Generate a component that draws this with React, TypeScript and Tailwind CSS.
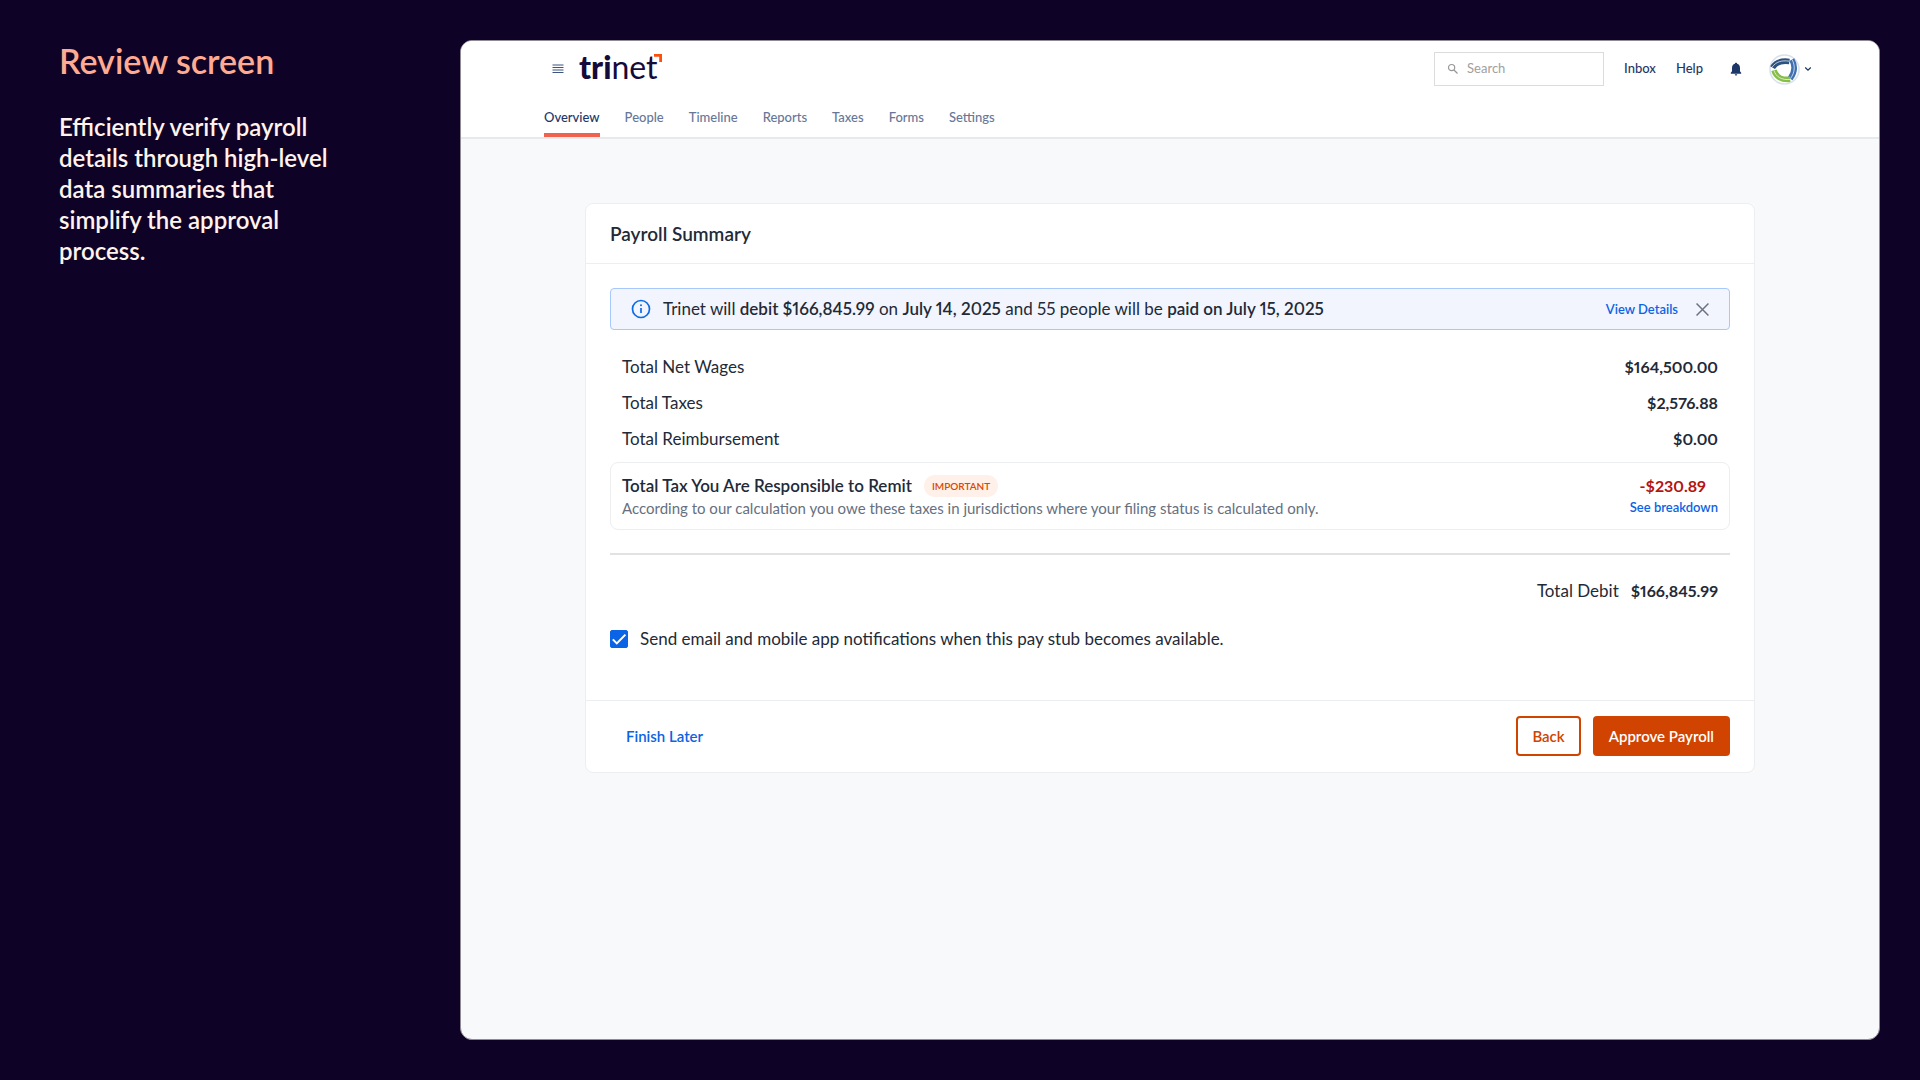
import { useState } from 'react';

const tabs = ['Overview', 'People', 'Timeline', 'Reports', 'Taxes', 'Forms', 'Settings'];

const totals = [
  { label: 'Total Net Wages', amount: '$164,500.00' },
  { label: 'Total Taxes', amount: '$2,576.88' },
  { label: 'Total Reimbursement', amount: '$0.00' },
];

function Logo() {
  return (
    <a href="#" aria-label="trinet" className="relative flex pb-1 text-[32px] leading-8 text-[#150a3c]">
      <span className="font-black">tri</span>
      <span className="font-normal">net</span>
      <svg className="absolute top-[3px] -right-1 h-2 w-2" viewBox="0 0 8 8" aria-hidden="true">
        <path d="M0 0h8v8H5.2V2.8H0z" fill="#ff4f0a" />
      </svg>
    </a>
  );
}

function CompanyAvatar() {
  return (
    <svg className="h-[31px] w-[31px]" viewBox="0 0 31 31" fill="none" aria-hidden="true">
      <circle cx="15.5" cy="15.5" r="14.5" fill="#fff" stroke="#d9e1ed" strokeWidth="1.6" />
      <path d="M3.6 13.6C6.6 8.6 12 6.2 20.4 7.4" stroke="#2d5280" strokeWidth="5.6" />
      <path d="M3.2 13C7 7.8 12.500 6 20.4 7.2" stroke="#fff" strokeWidth=".7" />
      <path d="M22.800 5.600c3.400 5.800 3 12.800-1.600 19" stroke="#3f6fb0" strokeWidth="5.600" />
      <path d="M23 5.600c3.400 5.800 3 12.800-1.600 19" stroke="#fff" strokeWidth=".7" />
      <path d="M5 16.200c1.800 6.400 7.600 10 16.200 9" stroke="#86bf46" strokeWidth="5.600" />
      <path d="M5 16.400c1.800 6.400 7.600 10 16.200 9" stroke="#fff" strokeWidth=".7" />
    </svg>
  );
}

function TopBar() {
  return (
    <header className="border-b-2 border-[#e7e9ec] bg-white pr-[67px] pl-[83px]">
      <div className="flex h-[56px] items-center justify-between">
        <div className="flex items-center gap-[15px] pl-2">
          <button aria-label="Open menu" className="text-[#3d5482]">
            <svg className="h-3 w-3" viewBox="0 0 12 12" stroke="currentColor" strokeWidth="1.2" aria-hidden="true">
              <path d="M.5 2h11M.5 4.500h11M.5 7h11M.5 9.500h11" />
            </svg>
          </button>
          <Logo />
        </div>
        <div className="flex items-center text-[13px] font-medium text-[#1e3769]">
          <label className="flex h-[34px] w-[170px] items-center gap-2 border border-[#dcdcdc] px-3">
            <svg className="h-3 w-3 shrink-0" viewBox="0 0 12 12" fill="none" stroke="#979797" strokeWidth="1.2" aria-hidden="true">
              <circle cx="4.600" cy="4.600" r="3.100" />
              <path d="M7 7l3.500 3.500" />
            </svg>
            <input
              type="search"
              placeholder="Search"
              aria-label="Search"
              className="w-full font-normal outline-none placeholder:text-[#a0a0a0]"
            />
          </label>
          <a href="#" className="ml-5">Inbox</a>
          <a href="#" className="ml-5">Help</a>
          <button aria-label="Notifications" className="ml-[27px]">
            <svg className="h-[14px] w-3" viewBox="0 0 12 14" fill="#1e3769" aria-hidden="true">
              <path d="M6 .8c.700 0 1.100.400 1.100 1C9 2.300 10 3.900 10 6v3.300l1.200 1.500v.900H.8v-.900L2 9.300V6c0-2.100 1-3.700 2.900-4.200 0-.600.400-1 1.100-1z" />
              <path d="M4.800 12.300h2.400c0 .800-.500 1.200-1.200 1.200s-1.200-.400-1.200-1.200z" />
            </svg>
          </button>
          <button aria-label="Account" className="ml-[27px] flex items-center gap-1">
            <CompanyAvatar />
            <svg className="h-2 w-2" viewBox="0 0 8 8" fill="none" stroke="currentColor" strokeWidth="1.300" aria-hidden="true">
              <path d="M1.200 2.600L4 5.200l2.800-2.600" />
            </svg>
          </button>
        </div>
      </div>
      <nav className="flex gap-[25px] text-[13px]">
        {tabs.map((tab) => (
          <a
            key={tab}
            href="#"
            className={
              tab === 'Overview'
                ? 'border-b-4 border-[#f0624d] pt-3 pb-2 leading-4 font-medium text-[#1e3769]'
                : 'border-b-4 border-transparent pt-3 pb-2 leading-4 font-medium text-[#667799]'
            }
          >
            {tab}
          </a>
        ))}
      </nav>
    </header>
  );
}

function DebitBanner({ onClose }: { onClose: () => void }) {
  return (
    <div className="flex h-[42px] items-center rounded border border-[#a6c8fa] bg-[#f2f5fe] px-5">
      <svg className="h-5 w-5 shrink-0" viewBox="0 0 20 20" fill="none" stroke="#0b6be6" strokeWidth="1.700" aria-hidden="true">
        <circle cx="10" cy="10" r="8.500" />
        <path d="M10 9v5" />
        <circle cx="10" cy="6.300" r="1" fill="#0b6be6" stroke="none" />
      </svg>
      <p className="ml-3 flex-1">
        Trinet will <b className="font-semibold">debit $166,845.99</b> on <b className="font-semibold">July 14, 2025</b> and 55
        people will be <b className="font-semibold">paid on July 15, 2025</b>
      </p>
      <a href="#" className="text-[13px] font-semibold text-[#0b63e5]">View Details</a>
      <button aria-label="Dismiss" onClick={onClose} className="ml-[18px]">
        <svg className="h-[13px] w-[13px]" viewBox="0 0 12 12" stroke="#6b7280" strokeWidth="1.400" aria-hidden="true">
          <path d="M.5.5l11 11M11.500.5L.5 11.500" />
        </svg>
      </button>
    </div>
  );
}

function PayrollSummary() {
  const [bannerOpen, setBannerOpen] = useState(true);
  const [notify, setNotify] = useState(true);

  return (
    <section className="rounded-lg border border-[#eceef0] bg-white text-[17px] leading-6 text-[#232a37] proportional-nums">
      <h2 className="flex h-[60px] items-center border-b border-[#eceef0] px-6 text-[19px] font-semibold">Payroll Summary</h2>

      <div className="px-6 pt-6 pb-[49px]">
        {bannerOpen && <DebitBanner onClose={() => setBannerOpen(false)} />}

        <dl className="mt-[19px] mb-[5px] px-3">
          {totals.map((row) => (
            <div key={row.label} className="flex h-9 items-center justify-between">
              <dt>{row.label}</dt>
              <dd className="text-base font-bold">{row.amount}</dd>
            </div>
          ))}
        </dl>

        <div className="flex justify-between rounded-lg border border-[#eceef0] px-[11px] py-[11px]">
          <div>
            <div className="flex items-center gap-3">
              <h3 className="font-semibold">Total Tax You Are Responsible to Remit</h3>
              <span className="rounded-full bg-[#fff0ea] px-2 text-[10px] leading-[22px] font-semibold text-[#d94700]">IMPORTANT</span>
            </div>
            <p className="text-[15px] leading-5 text-[#667080]">
              According to our calculation you owe these taxes in jurisdictions where your filing status is calculated only.
            </p>
          </div>
          <div className="flex flex-col items-end">
            <span className="pr-3 text-base font-bold text-[#b5120f]">-$230.89</span>
            <a href="#" className="text-[13px] leading-[18px] font-semibold text-[#0b63e5]">See breakdown</a>
          </div>
        </div>

        <div className="mt-[23px] flex h-[74px] items-center justify-end gap-3 border-t-2 border-[#e0e2e5] px-3">
          <span>Total Debit</span>
          <span className="text-base font-bold">$166,845.99</span>
        </div>

        <label className="flex items-center gap-3">
          <span className="relative h-[18px] w-[18px]">
            <input
              type="checkbox"
              checked={notify}
              onChange={(e) => setNotify(e.target.checked)}
              className="block h-[18px] w-[18px] appearance-none rounded-xs border border-[#0b63e5] checked:bg-[#0b63e5]"
            />
            {notify && (
              <svg className="pointer-events-none absolute inset-0" viewBox="0 0 18 18" fill="none" stroke="#fff" strokeWidth="2" aria-hidden="true">
                <path d="M2.800 9.400l4 4L15.400 4.600" />
              </svg>
            )}
          </span>
          Send email and mobile app notifications when this pay stub becomes available.
        </label>
      </div>

      <footer className="flex items-center justify-between border-t border-[#eceef0] px-6 pt-[15px] pb-4 text-[15px] font-semibold">
        <button className="px-4 text-[#0b63e5]">Finish Later</button>
        <div className="flex gap-3">
          <button className="h-10 rounded border-2 border-[#d14300] px-[14px] text-[#d14300]">Back</button>
          <button className="h-10 rounded bg-[#d14300] px-4 text-white">Approve Payroll</button>
        </div>
      </footer>
    </section>
  );
}

export default function App() {
  return (
    <div className="flex min-h-screen bg-[#0f0227] font-['Lato',sans-serif]">
      <aside className="w-[460px] shrink-0 px-[59px] pt-[41px]">
        <h1 className="text-[34px] leading-10 font-semibold text-[#ffab91]">Review screen</h1>
        <p className="mt-[30px] max-w-[300px] text-[24px] leading-[31px] font-semibold text-[#fff3ec]">
          Efficiently verify payroll details through high-level data summaries that simplify the approval process.
        </p>
      </aside>

      <div className="my-10 mr-10 flex flex-1 flex-col overflow-hidden rounded-xl border border-[#8f8b94] bg-[#f8f9fb]">
        <TopBar />
        <main className="px-[124px] pt-16 pb-16">
          <PayrollSummary />
        </main>
      </div>
    </div>
  );
}
